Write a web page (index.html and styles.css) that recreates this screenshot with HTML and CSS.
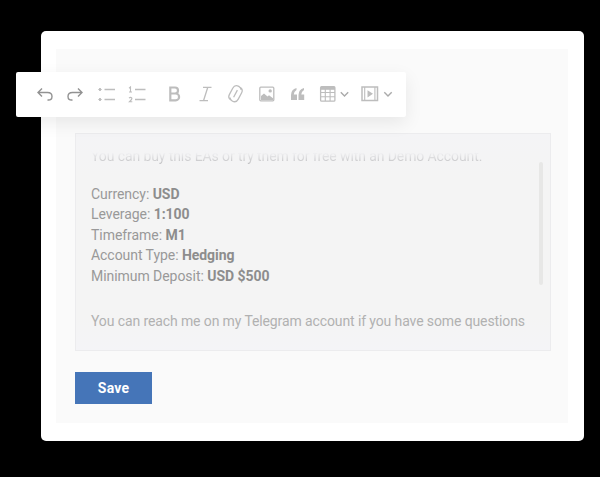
FILE: index.html
```
<!DOCTYPE html>
<html lang="en">
<head>
<meta charset="utf-8">
<title>Description editor</title>
<link rel="stylesheet" href="styles.css">
</head>
<body>
<main class="card">
  <section class="panel">
    <div class="editor">
      <p class="line line-top">You can buy this EAs or try them for free with an Demo Account.</p>
      <div class="details">
        <p class="line">Currency: <b>USD</b></p>
        <p class="line">Leverage: <b>1:100</b></p>
        <p class="line">Timeframe: <b>M1</b></p>
        <p class="line">Account Type: <b>Hedging</b></p>
        <p class="line">Minimum Deposit: <b>USD $500</b></p>
      </div>
      <p class="line line-last">You can reach me on my Telegram account if you have some questions</p>
      <span class="scrollbar"></span>
    </div>
    <button class="save">Save</button>
  </section>
  <div class="toolbar">
    <svg width="390" height="45" viewBox="0 0 390 45" fill="none" stroke="#bdbdbd" stroke-width="1.3">
      <g stroke="#929292" stroke-width="1.4">
        <path d="M26 16.500 22 20.500 26 24.500M22.500 20.500H31.500q4.500 0 4.500 4t-4.500 3.500"/>
        <path d="M62 16.500 66 20.500 62 24.500M65.500 20.500H56.500q-4.500 0-4.500 4t4.500 3.500"/>
      </g>
      <path d="M88.500 17.500H99M88.500 27.500H99M119 17.500H129.500M119 27.500H129.500"/>
      <path d="M82.500 17.500l1.500-1.500 1.500 1.500-1.500 1.500zM82.500 27.500l1.500-1.500 1.500 1.500-1.500 1.500z" fill="#bdbdbd" stroke-width=".8"/>
      <path d="M113 16.200 114.500 15v5M113 20H116M113 26.200q1.500-1.400 2.800-.2c.8 1-.8 2.200-2.500 3.800h3" stroke-width="1.100"/>
      <path d="M154.300 15.500h4.700a3 3 0 0 1 0 6h-4.700zM154.300 21.500h5.400a3.400 3.400 0 0 1 0 6.800h-5.400z" stroke-width="2.200"/>
      <path d="M187 15.300H195.500M183.500 28.700H192M191.800 15.300 187.500 28.700"/>
      <g transform="translate(219.500 21.700) rotate(28)">
        <path d="M-1.500 7.700q-3.500-.5-3.500-4V-3.500q0-4.500 4.500-4.500 2.500 0 3.500 2M1.500-7.700q3.500.5 3.500 4V3.500Q5 8 .5 8q-2.500 0-3.500-2M0-4V4"/>
      </g>
      <rect x="243.800" y="15.200" width="14" height="13.600" rx="1"/>
      <circle cx="254.200" cy="18.900" r="1.700" fill="#bdbdbd" stroke="none"/>
      <path d="M245 28v-4l3-2.500 3.500 3 1.500-1.200 4 3V28z" fill="#bdbdbd" stroke="none"/>
      <path d="M280.500 16q-5.500 1.300-5.500 7V28h6v-5.500h-3.200q0-3 2.700-4.500zM288 16q-5.500 1.300-5.500 7V28h5.700v-5.500h-2.900q0-3 2.700-4.500z" fill="#bdbdbd" stroke="none"/>
      <rect x="304.600" y="14.700" width="14.300" height="14.500" rx="1"/>
      <path d="M305 16.300H319" stroke-width="3"/>
      <path d="M305 20.500H319M305 24.800H319M309.300 17V29M314.100 17V29" stroke-width="1.100"/>
      <path d="M324.800 20.300 328.500 24 332.200 20.300M368.300 20.300 372 24 375.700 20.300" stroke="#aaa" stroke-width="1.400"/>
      <rect x="346" y="15" width="15.500" height="13.500" stroke-width="1.500"/>
      <path d="M348.700 15V28.500M358.900 15V28.500" stroke-width="1.100"/>
      <path d="M351.500 18.300V25.400L357 21.800Z" fill="#bdbdbd" stroke="none"/>
    </svg>
  </div>
</main>
</body>
</html>
```

FILE: styles.css
```
* { box-sizing: border-box; }

body {
  margin: 0;
  height: 477px;
  padding: 31px 16px 36px 41px;
  background: #000;
  overflow: hidden;
  font-family: Roboto, "Noto Sans", sans-serif;
}

.card {
  position: relative;
  height: 410px;
  padding: 18px 16px 18px 15px;
  border-radius: 5px;
  background: #fff;
}

.panel {
  height: 374px;
  padding: 84px 17px 19px 19px;
  background: #fafafa;
}

.editor {
  position: relative;
  height: 218px;
  padding: 12px 15px;
  border: 1px solid #ececee;
  background: linear-gradient(#f4f4f6, #f4f4f4 20%, #f4f4f4 85%, #f4f4f7);
}

.line {
  margin: 0;
  font-size: 14px;
  line-height: 20.6px;
  letter-spacing: -0.05px;
  color: #999;
  white-space: nowrap;
}

.line b {
  font-weight: 700;
  color: #8d8d8d;
}

.line-top {
  letter-spacing: -0.1px;
  color: transparent;
  background: linear-gradient(#f4f4f6 30%, #c4c4c6 80%);
  background-clip: text;
  -webkit-background-clip: text;
}

.details { margin-top: 17px; }

.line-last {
  margin-top: 24.5px;
  letter-spacing: -0.11px;
  color: #b1b1b1;
}

.scrollbar {
  position: absolute;
  top: 28px;
  right: 7px;
  width: 4px;
  height: 123px;
  border-radius: 2px;
  background: #e7e7e6;
}

.save {
  display: block;
  width: 77px;
  height: 32px;
  margin-top: 21px;
  padding: 0;
  border: 0;
  background: #4575b8;
  color: #fff;
  font: 700 14px/32px Roboto, "Noto Sans", sans-serif;
  letter-spacing: 0.2px;
}

.toolbar {
  position: absolute;
  top: 41px;
  left: -25px;
  width: 390px;
  height: 45px;
  border-radius: 2px;
  background: #fff;
  box-shadow: 0 6px 18px rgba(0, 0, 0, 0.08);
}

.toolbar svg { display: block; }
```
